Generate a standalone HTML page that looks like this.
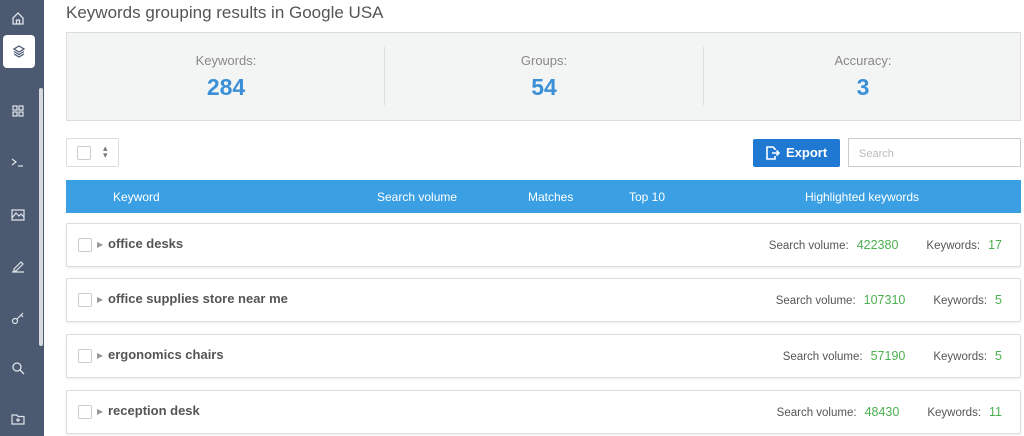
<!DOCTYPE html>
<html><head><style>
*{box-sizing:border-box;margin:0;padding:0}
body{width:1024px;height:436px;overflow:hidden;background:#fff;font-family:"Liberation Sans",sans-serif;position:relative;color:#444}
.sb{position:absolute;left:0;top:0;width:44px;height:436px;background:#4b5a71}
.ic{position:absolute;left:11px;width:14px;height:14px;color:#dfe4ea}
.act{position:absolute;left:3px;top:35px;width:32px;height:33px;background:#fff;border-radius:4px}
.scr{position:absolute;left:39px;top:88px;width:4px;height:258px;background:#d7dbe1;border-radius:2px}
h1{position:absolute;left:66px;top:3px;font-size:17px;font-weight:normal;color:#555}
.stats{position:absolute;left:66px;top:32px;width:955px;height:89px;background:#f3f4f4;border:1px solid #ddd}
.st{position:absolute;top:0;width:318px;height:87px;text-align:center}
.st .l{margin-top:20px;font-size:13px;color:#888}
.st .v{margin-top:6px;font-size:23px;color:#3a8fd6;font-weight:bold}
.dv{position:absolute;top:14px;width:1px;height:58px;background:#ddd}
.sel{position:absolute;left:66px;top:138px;width:53px;height:29px;border:1px solid #ddd;border-radius:2px}
.cb{position:absolute;width:14px;height:14px;border:1px solid #ccc;border-radius:2px;background:#fff}
.exp{position:absolute;left:753px;top:139px;width:87px;height:28px;background:#1f78d1;color:#fff;font-size:13px;font-weight:bold;border-radius:2px;line-height:28px;padding-left:33px}
.srch{position:absolute;left:848px;top:138px;width:173px;height:29px;border:1px solid #ccc;font-size:11px;color:#bbb;padding:9px 10px}
.hd{position:absolute;left:66px;top:180px;width:955px;height:33px;background:#3aa0e3;color:#fff;font-size:12px}
.hd span{position:absolute;top:10px}
.row{position:absolute;left:66px;width:955px;height:44px;border:1px solid #ddd;border-radius:2px;box-shadow:0 1px 2px rgba(0,0,0,.08)}
.row .t{position:absolute;left:41px;top:12px;font-size:13px;font-weight:bold;color:#555}
.row .ar{position:absolute;left:30px;top:16px;font-size:8px;color:#999}
.row .r{position:absolute;right:18px;top:14px;font-size:11.5px;color:#555;white-space:nowrap}
.g{color:#4caf50;font-size:12.5px;margin:0 28px 0 8px}
.g:last-child{margin-right:0}
</style></head><body>
<div class="sb">
<svg class="ic" style="top:11px" viewBox="0 0 14 14" fill="none" stroke="currentColor" stroke-width="1.3"><path d="M2 7L7 2l5 5v6H2z M5.5 13V9h3v4"/></svg>
<div class="act"></div>
<svg class="ic" style="top:44px;left:12px;color:#4b5a71" viewBox="0 0 14 14" fill="none" stroke="currentColor" stroke-width="1.3"><path d="M7 2l5 3-5 3-5-3z M2 7.5l5 3 5-3 M2 10l5 3 5-3"/></svg>
<svg class="ic" style="top:104px" viewBox="0 0 14 14" fill="none" stroke="currentColor" stroke-width="1.2"><rect x="2" y="2" width="4" height="4"/><rect x="8" y="2" width="4" height="4"/><rect x="2" y="8" width="4" height="4"/><rect x="8" y="8" width="4" height="4"/></svg>
<svg class="ic" style="top:155px" viewBox="0 0 14 14" fill="none" stroke="currentColor" stroke-width="1.2"><path d="M1 4l4 3-4 3 M7 11h5"/></svg>
<svg class="ic" style="top:207px" viewBox="0 0 14 14" fill="none" stroke="currentColor" stroke-width="1.2"><path d="M1 3h12v10H1z M1 11l4-5 3 3 2-2 3 3"/></svg>
<svg class="ic" style="top:259px" viewBox="0 0 14 14" fill="none" stroke="currentColor" stroke-width="1.2"><path d="M3 10l7-7 2 2-7 7H3z M1 13h12"/></svg>
<svg class="ic" style="top:311px" viewBox="0 0 14 14" fill="none" stroke="currentColor" stroke-width="1.2"><circle cx="4" cy="10" r="2.5"/><path d="M6 8l6-6 M10 4l2 2"/></svg>
<svg class="ic" style="top:361px" viewBox="0 0 14 14" fill="none" stroke="currentColor" stroke-width="1.3"><circle cx="6" cy="6" r="4"/><path d="M9 9l4 4"/></svg>
<svg class="ic" style="top:412px" viewBox="0 0 14 14" fill="none" stroke="currentColor" stroke-width="1.2"><path d="M1 3h5l1 1.5h6V12H1z M7 6v4 M5 8h4"/></svg>
<div class="scr"></div>
</div>
<h1>Keywords grouping results in Google USA</h1>
<div class="stats">
<div class="st" style="left:0"><div class="l">Keywords:</div><div class="v">284</div></div>
<div class="dv" style="left:317px"></div>
<div class="st" style="left:318px"><div class="l">Groups:</div><div class="v">54</div></div>
<div class="dv" style="left:636px"></div>
<div class="st" style="left:637px"><div class="l">Accuracy:</div><div class="v">3</div></div>
</div>
<div class="sel"><div class="cb" style="left:10px;top:7px"></div><span style="position:absolute;left:36px;top:6px;font-size:9px;color:#777;line-height:7px">▴<br>▾</span></div>
<div class="exp"><svg style="position:absolute;left:12px;top:7px" width="15" height="14" viewBox="0 0 15 14" fill="none" stroke="#fff" stroke-width="1.6"><path d="M8 1H2v12h8V10 M2 1h6l2 2v1 M7 7h7 M11.5 4.5L14 7l-2.5 2.5"/></svg>Export</div>
<div class="srch">Search</div>
<div class="hd"><span style="left:47px">Keyword</span><span style="left:311px">Search volume</span><span style="left:462px">Matches</span><span style="left:563px">Top 10</span><span style="left:739px">Highlighted keywords</span></div>
<div class="row" style="top:223px"><div class="cb" style="left:11px;top:14px"></div><span class="ar">▶</span><span class="t">office desks</span><span class="r">Search volume:<span class="g">422380</span>Keywords:<span class="g">17</span></span></div>
<div class="row" style="top:278px"><div class="cb" style="left:11px;top:14px"></div><span class="ar">▶</span><span class="t">office supplies store near me</span><span class="r">Search volume:<span class="g">107310</span>Keywords:<span class="g">5</span></span></div>
<div class="row" style="top:334px"><div class="cb" style="left:11px;top:14px"></div><span class="ar">▶</span><span class="t">ergonomics chairs</span><span class="r">Search volume:<span class="g">57190</span>Keywords:<span class="g">5</span></span></div>
<div class="row" style="top:390px"><div class="cb" style="left:11px;top:14px"></div><span class="ar">▶</span><span class="t">reception desk</span><span class="r">Search volume:<span class="g">48430</span>Keywords:<span class="g">11</span></span></div>
</body></html>
